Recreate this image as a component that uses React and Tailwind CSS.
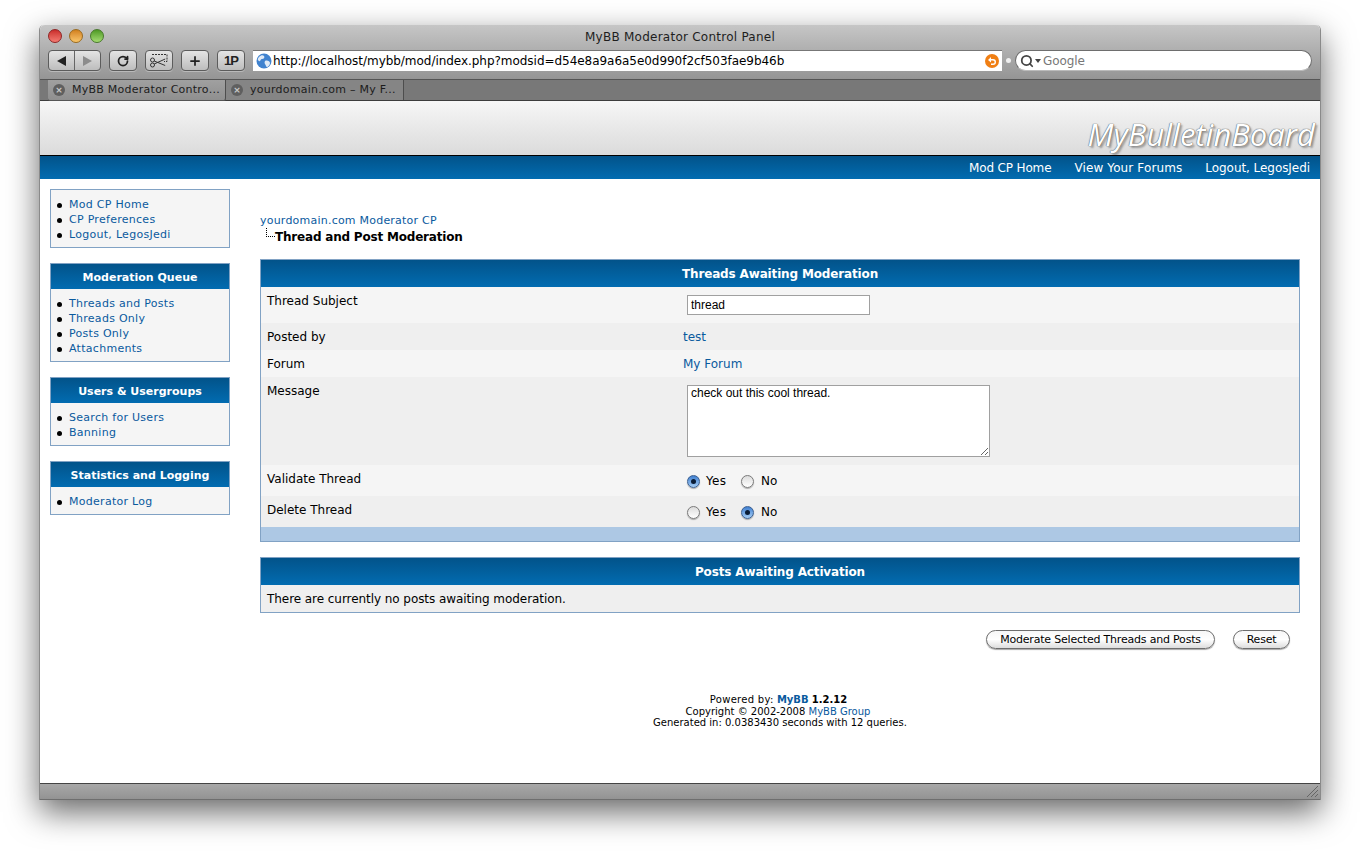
import { RotateCw, Plus, Search } from 'lucide-react';

const BLUE_HEAD = 'bg-gradient-to-b from-[#02538a] to-[#026cb1]';
const LINK = 'text-[#0a5a9e]';

const TrafficLight = ({ from, to, ring }) => (
  <span className={`block w-[14px] h-[14px] rounded-full border bg-gradient-to-b ${from} ${to} ${ring}`} />
);

const ChromeButton = ({ children, width = 'w-[28px]' }) => (
  <div className={`${width} h-[21px] shrink-0 flex items-center justify-center rounded-[4px] border border-[#5c5c5c] bg-gradient-to-b from-[#e4e4e4] to-[#bdbdbd] shadow-[0_1px_0_rgba(255,255,255,0.3)]`}>
    {children}
  </div>
);

const Tab = ({ label, active }) => (
  <div className={`w-[178px] h-[20px] flex items-center gap-[7px] pl-[5px] border-r border-[#4d4d4d] ${active ? 'bg-gradient-to-b from-[#a0a0a0] to-[#8f8f8f] rounded-b-[2px] shadow-[0_1px_0_#555]' : 'bg-[#858585]'}`}>
    <span className="w-[12px] h-[12px] rounded-full bg-[#5f5f5f] text-[#c9c9c9] text-[9px] leading-[12px] text-center font-bold">×</span>
    <span className="text-[11px] text-[#1c1c1c] tracking-[0.25px] whitespace-nowrap">{label}</span>
  </div>
);

const SideBox = ({ title, items }) => (
  <div className="w-[180px] border border-[#81a2c4] bg-[#f5f5f5]">
    {title && (
      <div className={`${BLUE_HEAD} h-[25px] pt-[4px] flex items-center justify-center text-white font-bold text-[11px]`}>{title}</div>
    )}
    <ul className="pt-[8px] pb-[4px] pl-[6px]">
      {items.map((item) => (
        <li key={item} className="h-[15px] flex items-center gap-[7px] text-[11px] tracking-[0.28px]">
          <span className="w-[5px] h-[5px] rounded-full bg-black" />
          <span className={LINK}>{item}</span>
        </li>
      ))}
    </ul>
  </div>
);

const Radio = ({ checked }) => (
  <span className={`w-[13px] h-[13px] rounded-full border flex items-center justify-center shadow-[0_1px_1px_rgba(0,0,0,0.3)] bg-gradient-to-b ${checked ? 'border-[#3a5f91] from-[#3f7fd0] to-[#a5cdf4]' : 'border-[#7a7a7a] from-[#dcdcdc] to-[#ffffff]'}`}>
    {checked && <span className="w-[5px] h-[5px] rounded-full bg-[#0a1c35]" />}
  </span>
);

const YesNo = ({ value }) => (
  <div className="flex items-center text-[12px] text-black">
    <Radio checked={value === 'yes'} />
    <span className="ml-[6px] w-[35px] tracking-[0.3px]">Yes</span>
    <Radio checked={value === 'no'} />
    <span className="ml-[7px]">No</span>
  </div>
);

const Row = ({ label, height, bg, children, childPad = '' }) => (
  <div className={`flex ${height} ${bg}`}>
    <div className="w-[422px] pl-[6px] pt-[5px] text-[12px] text-black">{label}</div>
    <div className={`flex-1 text-[12px] ${childPad}`}>{children}</div>
  </div>
);

const PillButton = ({ children, width }) => (
  <button className={`${width} h-[19px] pt-[1px] rounded-full border border-[#6e6e6e] bg-gradient-to-b from-[#f7f7f7] via-[#ffffff] to-[#dddddd] shadow-[0_1px_1px_rgba(0,0,0,0.35)] text-[11px] tracking-[-0.2px] text-black`}>
    {children}
  </button>
);

export default function App() {
  return (
    <div className="w-[1360px] h-[854px] bg-white pt-[25px] pl-[39px] overflow-hidden font-['DejaVu_Sans',sans-serif]">
      <div className="w-[1282px] h-[775px] flex flex-col border-x border-[#8a8a8a] rounded-t-[5px] shadow-[0_12px_32px_rgba(0,0,0,0.6)]">
        {/* Title bar and toolbar */}
        <div className="h-[55px] shrink-0 rounded-t-[5px] bg-gradient-to-b from-[#c6c6c6] to-[#959595] border-b border-[#555] px-[8px]">
          <div className="h-[25px] pb-[2px] relative flex items-center justify-center text-[12px] tracking-[0.25px] text-[#1e1e1e]">
            <div className="absolute left-0 top-[4px] flex gap-[7px]">
              <TrafficLight from="from-[#c92b2b]" to="to-[#f47a72]" ring="border-[#8f2424]" />
              <TrafficLight from="from-[#d2801b]" to="to-[#f9c66a]" ring="border-[#9a6a1e]" />
              <TrafficLight from="from-[#4e9a22]" to="to-[#a5dc72]" ring="border-[#48792c]" />
            </div>
            MyBB Moderator Control Panel
          </div>
          <div className="flex items-center gap-[8px]">
            <div className="w-[53px] h-[21px] shrink-0 flex rounded-[4px] border border-[#5c5c5c] bg-gradient-to-b from-[#e4e4e4] to-[#bdbdbd] shadow-[0_1px_0_rgba(255,255,255,0.3)]">
              <div className="w-[26px] flex items-center justify-center border-r border-[#666]">
                <span className="w-0 h-0 border-y-[5px] border-y-transparent border-r-[9px] border-r-[#222]" />
              </div>
              <div className="flex-1 flex items-center justify-center">
                <span className="w-0 h-0 border-y-[5px] border-y-transparent border-l-[9px] border-l-[#8c8c8c]" />
              </div>
            </div>
            <ChromeButton><RotateCw className="w-[12px] h-[12px] text-[#222]" strokeWidth={3.5} /></ChromeButton>
            <ChromeButton>
              <svg width="20" height="15" viewBox="0 0 20 15" fill="none" stroke="#333">
                <path d="M3 1.5h15v7h-3" strokeDasharray="2 1" />
                <circle cx="3.5" cy="7" r="2" />
                <circle cx="3.5" cy="12" r="2" />
                <path d="M5.2 8l11 4.5M5.2 11l11-5" />
              </svg>
            </ChromeButton>
            <ChromeButton><Plus className="w-[14px] h-[14px] text-[#222]" strokeWidth={3} /></ChromeButton>
            <ChromeButton><span className="font-['Liberation_Sans',sans-serif] text-[13px] font-bold text-[#222] tracking-[-1px]">1P</span></ChromeButton>
            <div className="w-[749px] h-[21px] shrink-0 flex items-center bg-white border-t border-[#777] pl-[3px] pr-[3px]">
              <svg width="16" height="16" viewBox="0 0 16 16" className="shrink-0">
                <circle cx="8" cy="8" r="7.5" fill="#3f82cf" />
                <path d="M3 4c2-2 4-2 5-1s0 3-2 3-1 3-3 2-1-3 0-4zM9 8c2-1 5 0 5 2s-2 4-3 4-1-2-2-3 0-3 0-3z" fill="#dfeaf6" />
              </svg>
              <span className="ml-[1px] flex-1 text-[12px] text-black whitespace-nowrap tracking-[-0.04px]">http://localhost/mybb/mod/index.php?modsid=d54e8a9a6a5e0d990f2cf503fae9b46b</span>
              <svg width="14" height="14" viewBox="0 0 14 14" className="shrink-0">
                <circle cx="7" cy="7" r="7" fill="#f07f14" />
                <path d="M3 6l3-3v2h2a3 3 0 0 1 0 6H6V9.6h2a1.6 1.6 0 0 0 0-3.2H6v2z" fill="#fff" />
              </svg>
            </div>
            <span className="-mx-[4px] w-[5px] h-[5px] rounded-full bg-[#f0f0f0] shrink-0" />
            <div className="w-[297px] h-[21px] shrink-0 flex items-center pl-[4px] rounded-full bg-white border border-[#6e6e6e] border-b-[#bbb]">
              <Search className="w-[14px] h-[14px] text-[#444]" strokeWidth={3} />
              <span className="ml-[1px] w-0 h-0 border-x-[3px] border-x-transparent border-t-[4px] border-t-[#444]" />
              <span className="ml-[2px] text-[12px] text-[#777] tracking-[-0.1px]">Google</span>
            </div>
          </div>
        </div>

        {/* Tabs */}
        <div className="h-[21px] shrink-0 bg-[#787878] border-b border-[#3c3c3c] pl-[8px] flex">
          <Tab label="MyBB Moderator Contro..." active />
          <Tab label="yourdomain.com – My F..." />
        </div>

        {/* Forum header */}
        <div className="h-[54px] shrink-0 bg-gradient-to-b from-[#f6f6f6] to-[#dbdbdb] flex items-end justify-end pr-[5px] pb-[1px]">
          <span className="font-['Open_Sans',sans-serif] italic font-medium text-[31px] leading-[40px] text-white [text-shadow:0_0_1px_#555,0_0_1px_#555,2px_2px_2px_#999]">MyBulletinBoard</span>
        </div>
        <div className={`h-[24px] shrink-0 border-t border-black ${BLUE_HEAD} flex items-center justify-end gap-[23px] pr-[10px] text-[12px] text-white`}>
          <span className="tracking-[-0.15px]">Mod CP Home</span>
          <span className="tracking-[0.12px]">View Your Forums</span>
          <span className="tracking-[-0.06px]">Logout, LegosJedi</span>
        </div>

        {/* Page */}
        <div className="flex-1 bg-white flex pl-[10px] pt-[10px]">
          <div className="w-[180px] flex flex-col gap-[15px]">
            <SideBox items={['Mod CP Home', 'CP Preferences', 'Logout, LegosJedi']} />
            <SideBox title="Moderation Queue" items={['Threads and Posts', 'Threads Only', 'Posts Only', 'Attachments']} />
            <SideBox title="Users & Usergroups" items={['Search for Users', 'Banning']} />
            <SideBox title="Statistics and Logging" items={['Moderator Log']} />
          </div>

          <div className="w-[1040px] ml-[30px]">
            <div className="pt-[25px] h-[70px]">
              <div className={`text-[11px] leading-[14px] tracking-[0.22px] ${LINK}`}>yourdomain.com Moderator CP</div>
              <div className="flex items-start">
                <span className="ml-[6px] w-[9px] h-[9px] border-l border-b border-dotted border-black" />
                <span className="text-[12px] leading-[18px] font-bold tracking-[-0.2px] text-black">Thread and Post Moderation</span>
              </div>
            </div>

            <div className="border border-[#81a2c4]">
              <div className={`${BLUE_HEAD} h-[27px] flex items-center justify-center text-white font-bold text-[12px] tracking-[-0.15px]`}>Threads Awaiting Moderation</div>
              <Row label="Thread Subject" height="h-[36px]" bg="bg-[#f5f5f5]" childPad="pt-[8px] pl-[4px]">
                <input defaultValue="thread" className="block w-[183px] h-[20px] px-[3px] bg-white border border-[#a0a0a0] text-[12px] text-black font-['Liberation_Sans',sans-serif]" />
              </Row>
              <Row label="Posted by" height="h-[27px]" bg="bg-[#efefef]" childPad="pt-[5px]">
                <span className={LINK}>test</span>
              </Row>
              <Row label="Forum" height="h-[27px]" bg="bg-[#f5f5f5]" childPad="pt-[5px]">
                <span className={LINK}>My Forum</span>
              </Row>
              <Row label="Message" height="h-[88px]" bg="bg-[#efefef]" childPad="pt-[8px] pl-[4px]">
                <textarea defaultValue="check out this cool thread." className="block w-[303px] h-[72px] px-[3px] py-0 bg-white border border-[#a0a0a0] text-[12px] leading-[14px] text-black font-['Liberation_Sans',sans-serif]" />
              </Row>
              <Row label="Validate Thread" height="h-[31px]" bg="bg-[#f5f5f5]" childPad="pt-[7px] pl-[4px]">
                <YesNo value="yes" />
              </Row>
              <Row label="Delete Thread" height="h-[31px]" bg="bg-[#efefef]" childPad="pt-[7px] pl-[4px]">
                <YesNo value="no" />
              </Row>
              <div className="h-[14px] bg-[#adc8e4]" />
            </div>

            <div className="mt-[15px] border border-[#81a2c4]">
              <div className={`${BLUE_HEAD} h-[27px] flex items-center justify-center text-white font-bold text-[12px] tracking-[-0.15px]`}>Posts Awaiting Activation</div>
              <div className="h-[27px] bg-[#efefef] pl-[6px] flex items-center text-[12px] tracking-[-0.06px] text-black">There are currently no posts awaiting moderation.</div>
            </div>

            <div className="mt-[17px] flex justify-end gap-[18px] pr-[10px]">
              <PillButton width="w-[229px]">Moderate Selected Threads and Posts</PillButton>
              <PillButton width="w-[57px]">Reset</PillButton>
            </div>

            <div className="mt-[45px] text-center text-[10px] leading-[11.5px] text-black">
              <div className="pr-[3px]"><span className="tracking-[0.3px]">Powered by:</span> <b className={LINK}>MyBB</b> <b>1.2.12</b></div>
              <div className="pr-[4px]">Copyright © 2002-2008 <span className={LINK}>MyBB Group</span></div>
              <div>Generated in: 0.0383430 seconds with 12 queries.</div>
            </div>
          </div>
        </div>

        {/* Status bar */}
        <div className="h-[17px] shrink-0 border-t border-[#444] border-b-[#6e6e6e] border-b bg-gradient-to-b from-[#a8a8a8] to-[#939393] flex justify-end items-end">
          <svg width="14" height="14" viewBox="0 0 14 14" className="mr-[1px] mb-[1px]">
            <path d="M2 13L13 2M6 13l7-7M10 13l3-3" stroke="#666" strokeWidth="1" fill="none" />
          </svg>
        </div>
      </div>
    </div>
  );
}
